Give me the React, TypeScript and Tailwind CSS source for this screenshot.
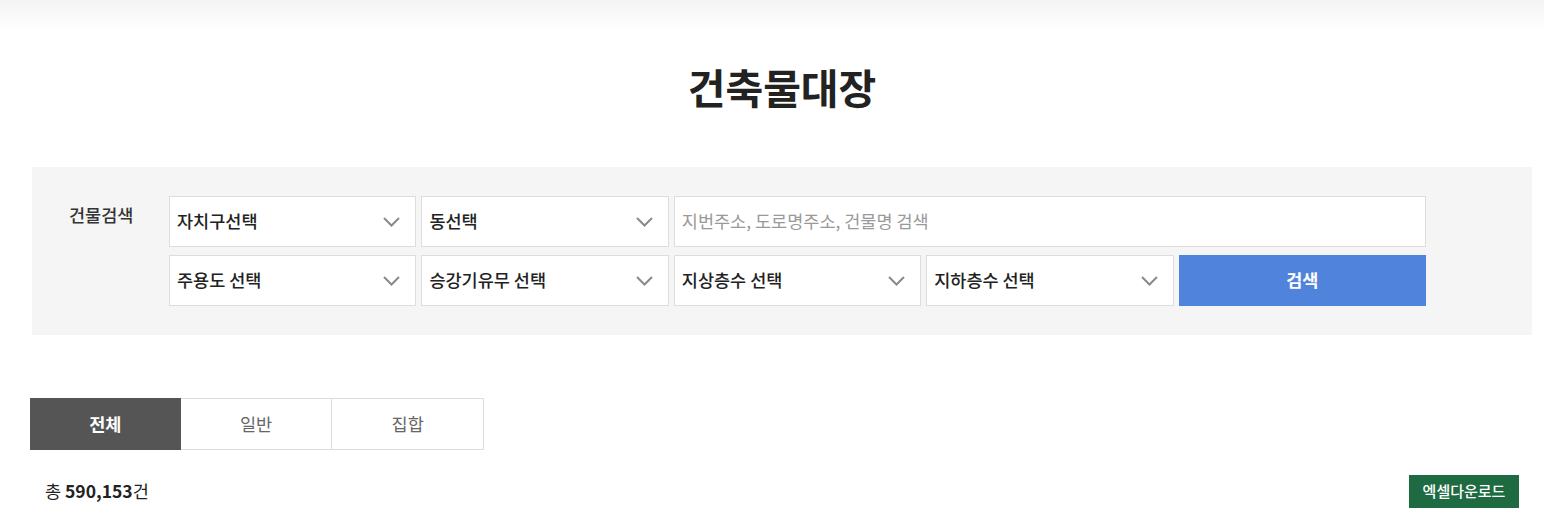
const font = { fontFamily: '"Noto Sans CJK KR", "Noto Sans", sans-serif' };

function Chevron() {
  return (
    <svg width="17" height="10" viewBox="0 0 17 10" fill="none">
      <polyline points="1,1 8.5,8.5 16,1" stroke="#8a8a8a" strokeWidth="2" />
    </svg>
  );
}

function SelectBox({ label }: { label: string }) {
  return (
    <div className="flex h-[51px] items-center justify-between border border-[#dddddd] bg-white pl-[7px] pr-[15px]">
      <span className="text-[17.5px] font-medium text-[#222222]">{label}</span>
      <Chevron />
    </div>
  );
}

export default function App() {
  const tabs = ['전체', '일반', '집합'];

  return (
    <div style={font} className="min-h-[526px] w-[1544px] bg-white">
      <div className="h-[30px] bg-gradient-to-b from-[#f3f3f3] to-white" />

      <div className="ml-[32px] w-[1500px]">
        <h1 className="mt-[30px] text-center text-[41px] font-bold leading-[52px] text-[#222222]">건축물대장</h1>

        <div className="mt-[55px] flex bg-[#f5f5f5] py-[29px]">
          <div className="w-[137px] pl-[37px] pt-[6px] text-[17.5px] font-medium text-[#333333]">건물검색</div>
          <div className="grid w-[1257px] grid-cols-5 gap-x-[5px] gap-y-[8px]">
            <SelectBox label="자치구선택" />
            <SelectBox label="동선택" />
            <div className="col-span-3 flex h-[51px] items-center border border-[#dddddd] bg-white px-[7px]">
              <span className="text-[17.5px] text-[#999999]">지번주소, 도로명주소, 건물명 검색</span>
            </div>
            <SelectBox label="주용도 선택" />
            <SelectBox label="승강기유무 선택" />
            <SelectBox label="지상층수 선택" />
            <SelectBox label="지하층수 선택" />
            <button className="h-[51px] bg-[#5084dc] text-[17.5px] font-bold text-white">검색</button>
          </div>
        </div>

        <div className="-ml-[2px] mt-[63px] flex w-[454px]">
          {tabs.map((t, i) => (
            <div
              key={t}
              className={
                i === 0
                  ? 'flex h-[52px] flex-1 items-center justify-center bg-[#555555] text-[17.5px] font-bold text-white'
                  : 'flex h-[52px] flex-1 items-center justify-center border border-l-0 border-[#dddddd] bg-white text-[17.5px] text-[#666666]'
              }
            >
              {t}
            </div>
          ))}
        </div>

        <div className="mt-[25px] flex items-center justify-between pr-[13px]">
          <div className="pl-[13px] text-[17.5px] text-[#222222]">
            총 <span className="font-bold">590,153</span>건
          </div>
          <button className="h-[33px] w-[110px] bg-[#1e6b42] text-[15px] font-medium text-white">엑셀다운로드</button>
        </div>
      </div>
    </div>
  );
}
